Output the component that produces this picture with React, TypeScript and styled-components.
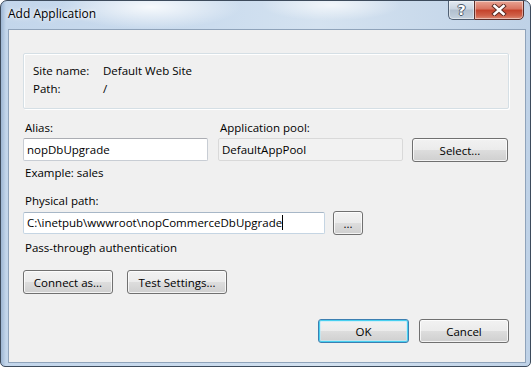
import styled, { createGlobalStyle, css } from "styled-components"

const GlobalStyle = createGlobalStyle`
  html, body {
    margin: 0;
    padding: 0;
    background: #ffffff;
  }
  * {
    box-sizing: border-box;
  }
`

const uiFont = `"Open Sans", "Noto Sans", "Liberation Sans", sans-serif`

const App = () => {
  return (
    <>
      <GlobalStyle />
      <Window>
        <TitleBar>
          <Title>Add Application</Title>
          <CaptionButtons>
            <HelpButton>?</HelpButton>
            <CloseButton>
              <svg width="16" height="12" viewBox="0 0 16 12">
                <path
                  d="M3.5 2 L12.5 10 M12.5 2 L3.5 10"
                  stroke="#5a2a22"
                  strokeWidth="4.4"
                  strokeLinecap="square"
                />
                <path
                  d="M3.5 2 L12.5 10 M12.5 2 L3.5 10"
                  stroke="#ffffff"
                  strokeWidth="2.6"
                  strokeLinecap="square"
                />
              </svg>
            </CloseButton>
          </CaptionButtons>
        </TitleBar>

        <Client>
          <GroupBox>
            <InfoRow>
              <InfoLabel>Site name:</InfoLabel>
              <span>Default Web Site</span>
            </InfoRow>
            <InfoRow>
              <InfoLabel>Path:</InfoLabel>
              <span>/</span>
            </InfoRow>
          </GroupBox>

          <FieldGrid>
            <Label>Alias:</Label>
            <Label>Application pool:</Label>
            <span />
            <TextBox>nopDbUpgrade</TextBox>
            <TextBox $readonly>DefaultAppPool</TextBox>
            <Button>Select...</Button>
          </FieldGrid>

          <Hint>Example: sales</Hint>

          <Label $top={12}>Physical path:</Label>
          <PathRow>
            <TextBox $focused>
              C:\inetpub\wwwroot\nopCommerceDbUpgrade<Caret />
            </TextBox>
            <Button $width={30}>...</Button>
          </PathRow>

          <Hint $top={5}>Pass-through authentication</Hint>

          <ButtonRow>
            <Button $width={90}>Connect as...</Button>
            <Button $width={100}>Test Settings...</Button>
          </ButtonRow>

          <Footer>
            <Button $width={91} $default>OK</Button>
            <Button $width={90}>Cancel</Button>
          </Footer>
        </Client>
      </Window>
    </>
  )
}

export default App

const Window = styled.div`
  width: 531px;
  height: 367px;
  border: 1px solid #3d4b5c;
  border-radius: 7px 7px 5px 5px;
  overflow: hidden;
  display: flex;
  flex-direction: column;
  font-family: ${uiFont};
  font-size: 11.5px;
  color: #000;
  background:
    radial-gradient(ellipse 90px 22px at 150px 6px, rgba(255,255,255,0.85), rgba(255,255,255,0) 100%),
    radial-gradient(ellipse 70px 16px at 330px 4px, rgba(255,255,255,0.7), rgba(255,255,255,0) 100%),
    linear-gradient(to right, #9db6d3 0px, #c3d6eb 5px, #cbdcee 40%, #d4e2f0 60%, #bfd2e7 100%);
`

const TitleBar = styled.div`
  height: 28px;
  flex: none;
  display: flex;
  justify-content: space-between;
  align-items: flex-start;
  padding: 0 6px 0 7px;
`

const Title = styled.div`
  padding-top: 5px;
  font-size: 12px;
  line-height: 16px;
  color: #000;
  text-shadow: 0 0 6px rgba(255,255,255,0.9), 0 0 3px rgba(255,255,255,0.9);
`

const CaptionButtons = styled.div`
  display: flex;
  margin-top: -1px;
`

const captionBase = css`
  height: 20px;
  border: 1px solid #4f5f73;
  display: flex;
  align-items: center;
  justify-content: center;
  box-shadow: inset 0 0 0 1px rgba(255,255,255,0.45);
`

const HelpButton = styled.div`
  ${captionBase};
  width: 26px;
  border-right: none;
  border-radius: 0 0 0 5px;
  background: linear-gradient(to bottom, #e3eaf2 0%, #c9d4e0 45%, #b1bfce 50%, #c4d1de 100%);
  font-family: "DejaVu Sans", sans-serif;
  font-weight: bold;
  font-size: 14px;
  color: #ffffff;
  text-shadow: -1px 0 #4c5a6b, 1px 0 #4c5a6b, 0 -1px #4c5a6b, 0 1px #4c5a6b;
`

const CloseButton = styled.div`
  ${captionBase};
  width: 50px;
  border-color: #5b2f2a;
  border-radius: 0 0 5px 0;
  background: linear-gradient(to bottom, #e8a595 0%, #d8735f 45%, #c4412a 50%, #cf6048 80%, #dc8a74 100%);
`

const Client = styled.div`
  flex: 1;
  margin: 0 4px 3px 7px;
  border: 1px solid #8fa3ba;
  background: #f0f0f0;
  padding: 23px 16px 0 14px;
  display: flex;
  flex-direction: column;
  align-items: flex-start;
`

const GroupBox = styled.div`
  width: 100%;
  height: 56px;
  border: 1px solid #d5dfe5;
  box-shadow: inset 1px 1px 0 #ffffff, 1px 1px 0 #ffffff;
  border-radius: 2px;
  padding: 8px 0 0 9px;
`

const InfoRow = styled.div`
  display: flex;
  line-height: 18px;
  height: 18px;
`

const InfoLabel = styled.span`
  width: 70px;
`

const Label = styled.div<{ $top?: number }>`
  line-height: 16px;
  padding-left: 2px;
  margin-top: ${(p) => p.$top ?? 0}px;
`

const FieldGrid = styled.div`
  margin-top: 11px;
  width: 100%;
  display: grid;
  grid-template-columns: 185px 185px 95px;
  column-gap: 10px;
  row-gap: 2px;
  & > button {
    margin-left: -1px;
    height: 24px;
  }
`

const TextBox = styled.div<{ $readonly?: boolean; $focused?: boolean }>`
  height: 23px;
  line-height: 21px;
  padding: 0 3px;
  white-space: nowrap;
  border: 1px solid #c8cdd4;
  border-top-color: #abadb3;
  border-radius: 2px;
  background: #ffffff;
  ${(p) =>
    p.$readonly &&
    css`
      background: #f2f2f2;
      border-color: #d9d9d9;
    `}
  ${(p) =>
    p.$focused &&
    css`
      width: 302px;
      height: 22px;
      line-height: 20px;
      border-color: #c5d5e3;
      border-top-color: #a7b7c7;
    `}
`

const Caret = styled.span`
  display: inline-block;
  width: 1px;
  height: 15px;
  background: #000;
  vertical-align: -3px;
`

const Hint = styled.div<{ $top?: number }>`
  line-height: 16px;
  padding-left: 2px;
  margin-top: ${(p) => p.$top ?? 3}px;
`

const PathRow = styled.div`
  margin-top: 2px;
  display: flex;
  align-items: center;
  gap: 8px;
`

const ButtonRow = styled.div`
  margin-top: 14px;
  display: flex;
  gap: 14px;
`

const Footer = styled.div`
  margin-top: 25px;
  align-self: flex-end;
  display: flex;
  gap: 10px;
`

const Button = styled.button<{ $width?: number; $default?: boolean }>`
  width: ${(p) => (p.$width ? `${p.$width}px` : "auto")};
  height: 24px;
  padding: 0;
  font-family: ${uiFont};
  font-size: 11.5px;
  color: #000;
  border: 1px solid #707070;
  border-radius: 3px;
  background: linear-gradient(to bottom, #f2f2f2 0%, #ebebeb 50%, #dddddd 51%, #cfcfcf 100%);
  box-shadow: inset 0 0 0 1px rgba(255,255,255,0.75);
  ${(p) =>
    p.$default &&
    css`
      border-color: #3c7fb1;
      box-shadow: inset 0 0 0 1px #48d0f0, inset 0 0 0 2px rgba(190,235,250,0.6);
    `}
`
